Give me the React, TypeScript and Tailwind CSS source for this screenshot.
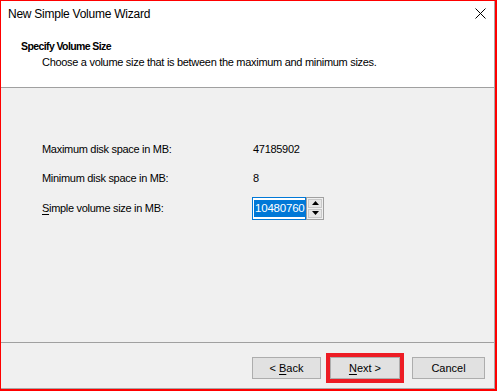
const font = { fontFamily: '"Liberation Sans", Arial, sans-serif' };

function Btn({ children, className = "" }: { children: React.ReactNode; className?: string }) {
  return (
    <div
      className={`flex h-[22px] items-center justify-center border border-[#adadad] bg-[#e1e1e1] text-[11px] text-black ${className}`}
    >
      {children}
    </div>
  );
}

export default function App() {
  return (
    <div
      className="flex h-[391px] w-[497px] flex-col border-t border-l border-r-2 border-b-2 border-[#ff0000] bg-white text-black"
      style={font}
    >
      <div className="flex flex-1 flex-col border-r border-b border-[#a8a8a8]">
        {/* title + header */}
        <div className="h-[86px] bg-white">
          <div className="flex h-[24px] items-center justify-between pl-[7px] pr-[8px] pt-[1px]">
            <span className="text-[12px] tracking-[-0.25px]">New Simple Volume Wizard</span>
            <svg width="11" height="11" viewBox="0 0 11 11" className="mb-[1px]">
              <path d="M0.5 0.5 L10.5 10.5 M10.5 0.5 L0.5 10.5" stroke="#000" strokeWidth="1" />
            </svg>
          </div>
          <div className="pl-[20px] pt-[15px] text-[10.5px] font-bold leading-[13px] tracking-[-0.6px]">
            Specify Volume Size
          </div>
          <div className="pl-[41px] pt-[2px] text-[11px] leading-[14px] tracking-[-0.3px]">
            Choose a volume size that is between the maximum and minimum sizes.
          </div>
        </div>
        <div className="h-px bg-[#a0a0a0]" />

        {/* body */}
        <div className="flex flex-1 flex-col bg-[#f0f0f0] pl-[41px] pt-[50px] text-[11px] tracking-[-0.3px]">
          <div className="flex h-[22px] items-center">
            <span className="w-[211px]">Maximum disk space in MB:</span>
            <span>47185902</span>
          </div>
          <div className="mt-[7px] flex h-[22px] items-center">
            <span className="w-[211px]">Minimum disk space in MB:</span>
            <span>8</span>
          </div>
          <div className="mt-[8px] flex h-[22px] items-center">
            <span className="w-[210px]">
              <span className="underline underline-offset-2">S</span>imple volume size in MB:
            </span>
            <div className="flex h-[23px] items-stretch">
              <div className="flex w-[54px] items-center border border-[#0078d7] bg-white pl-[1px]">
                <span className="bg-[#0078d7] px-[1px] text-[11.5px] leading-[17px] tracking-[-0.2px] text-white">
                  10480760
                </span>
                <span className="h-[17px] w-px bg-[#f29a3a]" />
              </div>
              <div className="flex w-[18px] flex-col border border-[#a0a0a0] bg-[#f0f0f0]">
                <div className="m-[1px] flex flex-1 items-center justify-center border border-[#c8c8c8] bg-[#e6e6e6]">
                  <svg width="7" height="4" viewBox="0 0 7 4">
                    <path d="M0 4 L3.5 0 L7 4 Z" fill="#000" />
                  </svg>
                </div>
                <div className="m-[1px] mt-0 flex flex-1 items-center justify-center border border-[#c8c8c8] bg-[#e6e6e6]">
                  <svg width="7" height="4" viewBox="0 0 7 4">
                    <path d="M0 0 L3.5 4 L7 0 Z" fill="#000" />
                  </svg>
                </div>
              </div>
            </div>
          </div>
        </div>

        <div className="h-px bg-[#a0a0a0]" />

        {/* footer */}
        <div className="flex h-[45px] items-start justify-end bg-[#f0f0f0] pr-[9px] pt-[10px]">
          <Btn className="mt-[4px] w-[69px]">
            &lt; <span className="ml-[3px] underline underline-offset-2">B</span>ack
          </Btn>
          <div className="ml-[5px] border-[4px] border-[#ed1c24]">
            <Btn className="w-[70px] border-[#0078d7]">
              <span className="underline underline-offset-2">N</span>ext &gt;
            </Btn>
          </div>
          <Btn className="ml-[8px] mt-[4px] w-[73px]">Cancel</Btn>
        </div>
      </div>
    </div>
  );
}
